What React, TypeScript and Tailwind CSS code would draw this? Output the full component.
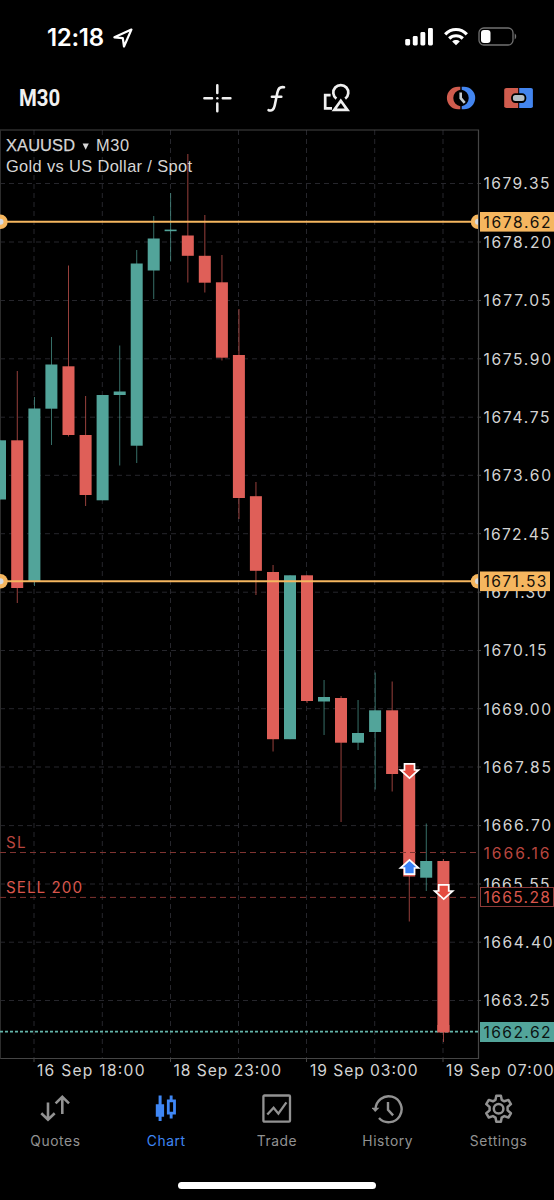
import type { ReactNode } from 'react';

const UP = '#52a49a';
const DOWN = '#df5f58';
const LEVEL = '#f5b65f';

// x centre, high, body top, body bottom, low, rising
type Candle = [number, number, number, number, number, boolean];

const candles: Candle[] = [
  [0, 440.3, 440.3, 499.5, 499.5, true],
  [17.2, 371, 440.3, 588, 603, false],
  [34.4, 397, 408.5, 581, 586, true],
  [51.4, 337, 364.5, 408.7, 445, true],
  [68.5, 265.5, 366.3, 435, 436.5, false],
  [85.6, 396, 435, 495, 506, false],
  [102.6, 395, 395, 500.3, 500.3, true],
  [119.7, 345.5, 391.5, 395, 465.5, true],
  [136.7, 250, 263.5, 445.7, 463, true],
  [153.7, 216, 238.5, 270.5, 299, true],
  [170.6, 193, 229.6, 231.2, 261.5, true],
  [187.8, 154, 235.5, 255.8, 282.5, false],
  [204.8, 215, 255.8, 282.7, 292.5, false],
  [221.9, 255, 282.3, 357.7, 360.5, false],
  [238.9, 309, 355, 498, 519, false],
  [255.9, 482, 496.2, 570.8, 595, false],
  [273, 565, 572, 739.2, 751.5, false],
  [290, 575.3, 575.3, 739.2, 739.2, true],
  [307, 575.3, 575.3, 701, 703, false],
  [324, 680, 697, 701.5, 735, true],
  [341, 696, 698, 742.7, 822, false],
  [358, 700, 733, 742.7, 750, true],
  [375.1, 672.5, 710.3, 732, 789.5, true],
  [392.1, 681.5, 710.3, 774, 791.5, false],
  [409.2, 770, 770, 876.5, 921.5, false],
  [426.2, 823.5, 861, 877.7, 891, true],
  [443.4, 859, 861, 1032, 1042, false],
];

const columns = [34, 102.3, 170.5, 238.5, 306.5, 374.7, 443];

const prices: [string, number, number][] = [
  ['1679.35', 183.5, 549.5],
  ['1678.20', 242, 551],
  ['1677.05', 300.5, 550.5],
  ['1675.90', 358.8, 551],
  ['1674.75', 417.2, 549.5],
  ['1673.60', 475.3, 551],
  ['1672.45', 533.7, 549.5],
  ['1671.30', 592.2, 546.5],
  ['1670.15', 650.5, 546.5],
  ['1669.00', 708.7, 551],
  ['1667.85', 767, 551],
  ['1666.70', 825.6, 551],
  ['1665.55', 884, 549.5],
  ['1664.40', 942.2, 552.5],
  ['1663.25', 1000.5, 549.5],
];

const dates: [string, number][] = [
  ['16 Sep 18:00', 37],
  ['18 Sep 23:00', 173.5],
  ['19 Sep 03:00', 310],
  ['19 Sep 07:00', 446],
];

const PriceLabel = ({ text, y, end, color = '#d3d3d3' }: { text: string; y: number; end: number; color?: string }) => (
  <text x="483.4" y={y + 5.8} textLength={end - 483.4} fill={color} fontSize="15.6">
    {text}
  </text>
);

const DealArrow = ({ x, y, up = false }: { x: number; y: number; up?: boolean }) => (
  <path
    d="M-5 -7.2H5V-1H9L0 7.2L-9 -1H-5Z"
    transform={`translate(${x} ${y}) scale(1 ${up ? -1 : 1})`}
    fill={up ? '#3a82f7' : '#e54b40'}
    stroke="#fff"
    strokeWidth="1.7"
  />
);

const LevelLine = ({ y, price, end, width }: { y: number; price: string; end: number; width: number }) => (
  <>
    <path d={`M0 ${y}H478`} stroke={LEVEL} strokeWidth="2" />
    <circle cx="0.5" cy={y} r="7.2" fill={LEVEL} />
    <circle cx="0.5" cy={y} r="3" fill="#d8dbe2" />
    <path d={`M478 ${y - 7.2}a7.2 7.2 0 0 0 0 14.4z`} fill={LEVEL} />
    <path d={`M478 ${y - 3}a3 3 0 0 0 0 6z`} fill="#d8dbe2" />
    <rect x="480" y={y - 9.8} width={width} height="19.6" fill={LEVEL} />
    <PriceLabel text={price} y={y} end={end} color="#15110a" />
  </>
);

const Chart = () => (
  <svg width="554" height="955" viewBox="0 129 554 955" className="block shrink-0" fontFamily="Inter, sans-serif">
    <g stroke="#26262c" strokeWidth="1" strokeDasharray="5 4">
      {columns.map((x) => (
        <path key={x} d={`M${x} 130V1058`} />
      ))}
      {prices.map(([label, y]) => (
        <path key={label} d={`M0 ${y}H478`} />
      ))}
    </g>
    <path d="M0 130H478.5V1058.5H0" fill="none" stroke="#454545" strokeWidth="1.2" />
    <path d="M0.5 130V1058.5" stroke="#2c2c2c" />
    {[34, 170.5, 306.5, 443].map((x) => (
      <path key={x} d={`M${x} 1058V1062`} stroke="#454545" />
    ))}
    {prices.map(([label, y]) => (
      <path key={label} d={`M478 ${y}h3`} stroke="#454545" />
    ))}

    <g fill="#d6d6d6" fontFamily="Liberation Sans, sans-serif" fontSize="16.4">
      <text x="6" y="151" textLength="69" stroke="#d6d6d6" strokeWidth="0.25">XAUUSD</text>
      <path d="M82.6 143.4H88.8L85.7 149.8Z" />
      <text x="96" y="151" textLength="33">M30</text>
      <text x="6" y="172" textLength="186">Gold vs US Dollar / Spot</text>
    </g>

    {candles.map(([x, high, top, bottom, low, rising]) => (
      <g key={x} fill={rising ? UP : DOWN}>
        <rect x={x - 0.4} y={high} width="0.9" height={low - high} opacity="0.75" />
        <rect x={x - 6} y={top} width="12" height={bottom - top} />
      </g>
    ))}

    <g stroke="#803431" strokeWidth="1" strokeDasharray="6 4">
      <path d="M0 852.5H478" />
      <path d="M0 897.4H478" />
    </g>
    <g fill="#d9564c" fontSize="15.2">
      <text x="6" y="848" textLength="19.5" fill="#b8463f">SL</text>
      <text x="6" y="892.5" textLength="76">SELL 200</text>
    </g>
    <path d="M0 1031.7H478" stroke="#64b5aa" strokeWidth="1.7" strokeDasharray="3 2" />
    <rect x="437.4" y="1025" width="12" height="7.5" fill={DOWN} />

    {prices.map(([label, y, end]) => (
      <PriceLabel key={label} text={label} y={y} end={end} />
    ))}
    <LevelLine y={221.8} price="1678.62" end={550.5} width={74} />
    <LevelLine y={581.3} price="1671.53" end={546.5} width={70} />
    <PriceLabel text="1666.16" y={852.8} end={549.5} color="#b8463f" />
    <rect x="480.5" y="887.5" width="73" height="19" fill="#000" stroke="#8d3a38" />
    <PriceLabel text="1665.28" y={897} end={550} color="#d9564c" />
    <rect x="480" y="1022" width="74" height="20" fill={UP} />
    <PriceLabel text="1662.62" y={1032} end={550.5} color="#0b1413" />

    <DealArrow x={409.5} y={771} />
    <DealArrow x={409.5} y={867} up />
    <DealArrow x={443.7} y={892} />

    <g fill="#d3d3d3" fontSize="15.6">
      {dates.map(([label, x]) => (
        <text key={label} x={x} y="1076" textLength="107.5">{label}</text>
      ))}
    </g>
  </svg>
);

const StatusBar = () => (
  <div className="flex h-[66px] shrink-0 items-start justify-between pt-[26px] pr-[37px] pl-[47px]">
    <div className="flex items-center gap-[9px]">
      <span className="text-[24px] leading-[23px] font-semibold tracking-[-0.3px] text-white">12:18</span>
      <svg width="20" height="20" viewBox="0 0 20 20" fill="none" stroke="#fff" strokeWidth="2.2" strokeLinejoin="round">
        <path d="M18.4 1.6L1.4 9.3L9.8 10.2L11 18.5Z" />
      </svg>
    </div>
    <div className="flex items-center gap-[10px] pt-[1px]">
      <svg width="29" height="19" viewBox="0 0 29 19" fill="#fff">
        <rect x="0.2" y="12" width="4.9" height="6.5" rx="1.4" />
        <rect x="7.8" y="9" width="4.9" height="9.5" rx="1.4" />
        <rect x="15.4" y="5" width="4.9" height="13.5" rx="1.4" />
        <rect x="23" y="1" width="4.9" height="17.5" rx="1.4" />
      </svg>
      <svg width="24" height="19" viewBox="0 0 24 19" fill="none" stroke="#fff" strokeWidth="3.2">
        <path d="M1.2 7.3C7.3 0.9 16.7 0.9 22.8 7.3" />
        <path d="M5.2 11.5C9 7.8 15 7.8 18.8 11.5" />
        <path d="M12 18.2L8.2 14.4C10.4 12.5 13.6 12.5 15.8 14.4Z" fill="#fff" stroke="none" />
      </svg>
      <svg width="39" height="19" viewBox="0 0 39 19">
        <rect x="1" y="1" width="34" height="17" rx="4.8" fill="none" stroke="#727272" strokeWidth="1.3" />
        <rect x="3" y="3" width="9.5" height="13" rx="3" fill="#fff" />
        <path d="M36.7 6.6c2 .8 2 5 0 5.8z" fill="#727272" />
      </svg>
    </div>
  </div>
);

const Toolbar = () => (
  <div className="flex h-[63px] shrink-0 items-center pr-[20px] pl-[19px]">
    <div className="w-[183px] font-['Roboto'] text-2xl leading-none font-bold text-[#f0f0f0]">
      <span className="inline-block origin-left scale-x-[0.85]">M30</span>
    </div>
    <svg width="30" height="30" viewBox="0 0 30 30" stroke="#f0f0f0" strokeWidth="2.5" strokeLinecap="round">
      <path d="M15.3 2.2V10M15.3 20.5V28.3M2.4 15.3H10M20.8 15.3H28.4" />
      <path d="M15.3 15.3h.01" />
    </svg>
    <svg className="ml-[33px]" width="22" height="30" viewBox="0 0 22 30" fill="none" stroke="#f0f0f0" strokeWidth="2.6" strokeLinecap="round">
      <path d="M19 4.3C14.5 3.4 13.1 6 12.4 9.5L9.7 22.5C8.9 26.5 7 28.4 3.6 27.2M6.9 13.8H16.3" />
    </svg>
    <svg className="ml-[34px]" width="30" height="30" viewBox="0 0 30 30" fill="none" stroke="#f0f0f0" strokeWidth="2.7">
      <path d="M9.6 12.1H4.2V25.4H11" />
      <path d="M15.4 15.6A7.5 7.5 0 1 1 24.2 15.6" />
      <path d="M19.8 17.7L26.4 26.9H13.2Z" />
    </svg>
    <svg className="ml-auto" width="30" height="26" viewBox="0 0 30 26">
      <path d="M14.3 1.8H12.1A11.2 11.2 0 0 0 12.1 24.2H14.3v-3a8.3 8.3 0 0 1 0-16.4z" fill="#d05c4e" />
      <path d="M15.7 1.8H18A11.2 11.2 0 0 1 18 24.2H15.7v-3a8.3 8.3 0 0 0 0-16.4z" fill="#4385ef" />
      <path d="M14.7 7.5V13.2L18.7 17.8" fill="none" stroke="#c2c9ce" strokeWidth="2.6" />
    </svg>
    <svg className="ml-[28px]" width="30" height="26" viewBox="0 0 30 26">
      <path d="M2.5 3H14.2V23H2.5Q.2 23 .2 21.2V4.8Q.2 3 2.5 3Z" fill="#d05c4e" />
      <path d="M15.2 3H27Q28.9 3 28.9 4.8V21.2Q28.9 23 27 23H15.2Z" fill="#4385ef" />
      <rect x="8" y="9.2" width="13.4" height="7.8" rx="3.4" fill="#b5bec5" stroke="#000" strokeWidth="1.8" />
    </svg>
  </div>
);

const QuotesIcon = () => (
  <svg width="32" height="32" viewBox="0 0 32 32" fill="none" stroke="currentColor" strokeWidth="2.6">
    <path d="M9 8.5V25.5M2.3 19.2L9 25.7L15.7 19.2M23.3 20V3M16.6 9.4L23.3 2.9L30 9.4" />
  </svg>
);

const ChartIcon = () => (
  <svg width="32" height="32" viewBox="0 0 32 32" fill="currentColor">
    <path d="M8.6 1.5H11.6V10.2H14.1V22.7H11.6V27H8.6V22.7H5.8V10.2H8.6Z" />
    <path fillRule="evenodd" d="M19.7 1.5H22.6V5.5H25.9V20.5H22.6V24.5H19.7V20.5H16.9V5.5H19.7ZM19.7 8.2V17.8H23.1V8.2Z" />
  </svg>
);

const TradeIcon = () => (
  <svg width="32" height="32" viewBox="0 0 32 32" fill="none" stroke="currentColor" strokeWidth="2.3">
    <rect x="2.4" y="1.5" width="26.6" height="26.2" rx="1" />
    <path d="M6.3 20.5L12.6 13.7L17.4 19.7L25.4 8.3" />
  </svg>
);

const HistoryIcon = () => (
  <svg width="32" height="32" viewBox="0 0 32 32" fill="none" stroke="currentColor" strokeWidth="2.4">
    <path d="M3.6 15.4A13 13 0 1 1 7 24" />
    <path d="M-.4 13.8H7.4L3.2 18Z" fill="currentColor" stroke="none" />
    <path d="M16 8V15.8L21.1 21.4" />
  </svg>
);

const SettingsIcon = () => (
  <svg width="32" height="32" viewBox="0 0 32 32" fill="none" stroke="currentColor" strokeWidth="2.5" strokeLinejoin="round">
    <circle cx="15.6" cy="14.7" r="4.8" />
    <path d="M13.3 1.7H17.9L18.7 5.8L21.3 7.3L25.4 5.9L27.9 10.1L24.6 13V16.4L27.9 19.3L25.4 23.5L21.3 22.1L18.7 23.6L17.9 27.7H13.3L12.5 23.6L9.9 22.1L5.8 23.5L3.3 19.3L6.6 16.4V13L3.3 10.1L5.8 5.9L9.9 7.3L12.5 5.8Z" />
  </svg>
);

const tabs: { label: string; icon: ReactNode; active?: boolean }[] = [
  { label: 'Quotes', icon: <QuotesIcon /> },
  { label: 'Chart', icon: <ChartIcon />, active: true },
  { label: 'Trade', icon: <TradeIcon /> },
  { label: 'History', icon: <HistoryIcon /> },
  { label: 'Settings', icon: <SettingsIcon /> },
];

const TabBar = () => (
  <nav className="grid h-[98px] shrink-0 grid-cols-5 pt-[10px]">
    {tabs.map((tab) => (
      <button
        key={tab.label}
        className={`flex flex-col items-center ${tab.active ? 'text-[#3f87f5]' : 'text-[#929292]'}`}
      >
        {tab.icon}
        <span className="mt-[5px] text-[13.8px] leading-5 tracking-[0.6px]">{tab.label}</span>
      </button>
    ))}
  </nav>
);

const App = () => {
  return (
    <div className="flex h-[1200px] w-[554px] flex-col overflow-hidden bg-black font-['Inter',sans-serif]">
      <StatusBar />
      <Toolbar />
      <Chart />
      <TabBar />
      <div className="mx-auto h-[7px] w-[198px] rounded-full bg-white" />
    </div>
  );
};

export default App;
